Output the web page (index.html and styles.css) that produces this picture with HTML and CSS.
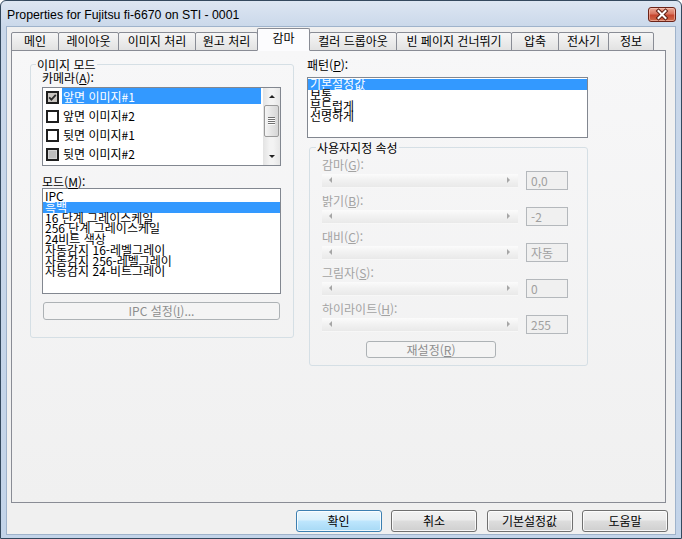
FILE: index.html
```html
<!DOCTYPE html>
<html lang="ko">
<head>
<meta charset="utf-8">
<title>Properties for Fujitsu fi-6670 on STI - 0001</title>
<link rel="stylesheet" href="styles.css">
</head>
<body>
<div class="window">
  <div class="titlebar">
    <span class="title">Properties for Fujitsu fi-6670 on STI - 0001</span>
    <span class="close">
      <svg width="26" height="13" viewBox="0 0 26 13">
        <path d="M9.5 3 L16.5 10 M16.5 3 L9.5 10" stroke="#5b1d12" stroke-width="4" stroke-linecap="square" fill="none"/>
        <path d="M9.5 3 L16.5 10 M16.5 3 L9.5 10" stroke="#ffffff" stroke-width="2" stroke-linecap="square" fill="none"/>
      </svg>
    </span>
  </div>
  <div class="client">
    <div class="tabs">
      <div class="tab t-main">메인</div>
      <div class="tab t-layout">레이아웃</div>
      <div class="tab t-image">이미지 처리</div>
      <div class="tab t-doc">원고 처리</div>
      <div class="tab t-gamma active">감마</div>
      <div class="tab t-dropout">컬러 드롭아웃</div>
      <div class="tab t-blank">빈 페이지 건너뛰기</div>
      <div class="tab t-comp">압축</div>
      <div class="tab t-imprinter">전사기</div>
      <div class="tab t-info">정보</div>
    </div>
    <div class="panel">
      <div class="columns">
        <fieldset class="group group-mode">
          <legend>이미지 모드</legend>
          <div class="label">카메라(<u>A</u>):</div>
          <div class="listbox camera">
            <div class="checklist">
              <div class="check-row">
                <span class="cb cb-checked">
                  <svg width="9" height="9" viewBox="0 0 9 9"><path d="M1.2 4.3 L3.4 6.6 L7.8 1.8" stroke="#2a2a2a" stroke-width="1.8" fill="none"/></svg>
                </span>
                <span class="item-text selected">앞면 이미지#1</span>
              </div>
              <div class="check-row">
                <span class="cb"></span>
                <span class="item-text">앞면 이미지#2</span>
              </div>
              <div class="check-row">
                <span class="cb"></span>
                <span class="item-text">뒷면 이미지#1</span>
              </div>
              <div class="check-row">
                <span class="cb cb-mixed"></span>
                <span class="item-text">뒷면 이미지#2</span>
              </div>
            </div>
            <div class="vscroll">
              <div class="sb-btn"><span class="arrow-up"></span></div>
              <div class="sb-thumb"><span class="grip"></span></div>
              <div class="sb-space"></div>
              <div class="sb-btn"><span class="arrow-down"></span></div>
            </div>
          </div>
          <div class="label label-mode">모드(<u>M</u>):</div>
          <div class="listbox mode">
            <div class="opt">IPC</div>
            <div class="opt selected">흑백</div>
            <div class="opt">16 단계 그레이스케일</div>
            <div class="opt">256 단계 그레이스케일</div>
            <div class="opt">24비트 색상</div>
            <div class="opt">자동감지 16-레벨그레이</div>
            <div class="opt">자동감지 256-레벨그레이</div>
            <div class="opt">자동감지 24-비트그레이</div>
          </div>
          <button class="btn-disabled ipc-btn" type="button">IPC 설정(<u>I</u>)...</button>
        </fieldset>

        <div class="right-col">
          <div class="label">패턴(<u>P</u>):</div>
          <div class="listbox pattern">
            <div class="opt selected">기본설정값</div>
            <div class="opt">보통</div>
            <div class="opt">부드럽게</div>
            <div class="opt">선명하게</div>
          </div>
          <fieldset class="group custom">
            <legend>사용자지정 속성</legend>
            <div class="prop">
              <div class="label prop-label">감마(<u>G</u>):</div>
              <div class="prop-row">
                <div class="track"><span class="tri-left"></span><span class="tri-right"></span></div>
                <div class="editbox">0,0</div>
              </div>
            </div>
            <div class="prop">
              <div class="label prop-label">밝기(<u>B</u>):</div>
              <div class="prop-row">
                <div class="track"><span class="tri-left"></span><span class="tri-right"></span></div>
                <div class="editbox">-2</div>
              </div>
            </div>
            <div class="prop">
              <div class="label prop-label">대비(<u>C</u>):</div>
              <div class="prop-row">
                <div class="track"><span class="tri-left"></span><span class="tri-right"></span></div>
                <div class="editbox">자동</div>
              </div>
            </div>
            <div class="prop">
              <div class="label prop-label">그림자(<u>S</u>):</div>
              <div class="prop-row">
                <div class="track"><span class="tri-left"></span><span class="tri-right"></span></div>
                <div class="editbox">0</div>
              </div>
            </div>
            <div class="prop">
              <div class="label prop-label">하이라이트(<u>H</u>):</div>
              <div class="prop-row">
                <div class="track"><span class="tri-left"></span><span class="tri-right"></span></div>
                <div class="editbox">255</div>
              </div>
            </div>
            <button class="btn-disabled reset-btn" type="button">재설정(<u>R</u>)</button>
          </fieldset>
        </div>
      </div>
    </div>
    <div class="buttons">
      <button class="pbtn default" type="button">확인</button>
      <button class="pbtn" type="button">취소</button>
      <button class="pbtn" type="button">기본설정값</button>
      <button class="pbtn" type="button">도움말</button>
    </div>
  </div>
</div>
</body>
</html>
```
FILE: styles.css
```css
* { box-sizing: border-box; }
html, body { margin: 0; padding: 0; }
body {
  width: 682px;
  height: 539px;
  overflow: hidden;
  font-family: "Noto Sans CJK KR", "Liberation Sans", sans-serif;
  font-size: 12px;
  color: #000;
  background: #ffffff;
}
u { text-decoration: underline; text-underline-offset: 1px; }

.window {
  width: 682px;
  height: 539px;
  display: flex;
  flex-direction: column;
  border: 1px solid #34495e;
  border-radius: 6px 6px 0 0;
  background: linear-gradient(180deg, #dde6f2 0px, #cad8ea 26px, #c3d4e9 100%);
  padding: 0 6px 4px 6px;
}

.titlebar {
  height: 26px;
  display: flex;
  align-items: center;
  justify-content: space-between;
  margin-right: -1px;
}
.title {
  font-family: "Liberation Sans", Arial, sans-serif;
  font-size: 12.3px;
  color: #000;
  padding-top: 1px;
}
.close {
  width: 28px;
  height: 15px;
  margin-top: 1px;
  border: 1px solid #6b2318;
  border-radius: 3px;
  background: linear-gradient(#eaa995, #d97560 45%, #c6462e 55%, #d06b4c);
  box-shadow: inset 0 0 0 1px rgba(255, 215, 205, 0.5);
  display: flex;
  align-items: center;
  justify-content: center;
}

.client {
  flex: 1;
  display: flex;
  flex-direction: column;
  background: #f0f0f0;
  padding: 0 7px 2px 4px;
  box-shadow: 0 0 0 1px #9fb3cb;
}

/* tabs */
.tabs {
  display: flex;
  align-items: flex-end;
  height: 24px;
  margin-bottom: -1px;
  position: relative;
  z-index: 2;
}
.tab {
  height: 19px;
  margin-right: -1px;
  border: 1px solid #898c95;
  border-radius: 2px 2px 0 0;
  background: linear-gradient(#f6f6f6, #e2e2e2);
  text-align: center;
  line-height: 16px;
  white-space: nowrap;
}
.tab.active {
  height: 23px;
  padding-top: 1px;
  background: #fcfcfe;
  border-bottom-color: #fcfcfe;
  position: relative;
  z-index: 1;
}
.t-main { width: 48px; }
.t-layout { width: 61px; }
.t-image { width: 78px; }
.t-doc { width: 63px; }
.t-gamma { width: 53px; }
.t-dropout { width: 88px; }
.t-blank { width: 116px; }
.t-comp { width: 48px; }
.t-imprinter { width: 51px; }
.t-info { width: 46px; }

/* panel */
.panel {
  flex: 1;
  margin-right: 2px;
  border: 1px solid #898c95;
  background: linear-gradient(#f7f7f8, #f0f0f0);
  padding: 7px 0 0 18px;
}
.columns {
  display: grid;
  grid-template-columns: 264px 281px;
  column-gap: 13px;
  align-items: start;
}

.group {
  margin: 0;
  min-width: 0;
  border: 1px solid #d5dfe5;
  border-radius: 3px;
  padding: 0 12px 17px 11px;
}
.group legend {
  padding: 0 1px;
  margin-left: -6px;
  height: 13px;
  line-height: 13px;
  color: #000;
}
.label {
  height: 13px;
  line-height: 13px;
  white-space: nowrap;
}

.listbox {
  border: 1px solid #828790;
  background: #ffffff;
}

/* camera checklist */
.camera {
  margin-top: 3px;
  height: 79px;
  display: flex;
}
.checklist {
  flex: 1;
  padding: 0 2px 0 3px;
}
.check-row {
  height: 19px;
  display: flex;
  align-items: flex-start;
}
.cb {
  flex: none;
  width: 13px;
  height: 13px;
  margin-top: 3px;
  margin-right: 3px;
  border: 2px solid #1e1e1e;
  background: #ffffff;
  display: flex;
  align-items: center;
  justify-content: center;
}
.cb-checked { background: #c9c5c0; }
.cb-mixed { background: #bdbdbd; box-shadow: inset 0 0 0 1px #d2d2d2; }
.item-text {
  flex: 1;
  height: 16px;
  line-height: 14px;
  padding: 2px 0 0 1px;
  white-space: nowrap;
}
.item-text.selected { background: #3399ff; color: #ffffff; }

.vscroll {
  width: 17px;
  display: flex;
  flex-direction: column;
  background: linear-gradient(to right, #e3e3e3, #f3f3f3 40%, #f3f3f3 60%, #e6e6e6);
}
.sb-btn {
  height: 17px;
  display: flex;
  align-items: center;
  justify-content: center;
}
.arrow-up {
  width: 0;
  height: 0;
  border-left: 3px solid transparent;
  border-right: 3px solid transparent;
  border-bottom: 3px solid #222;
}
.arrow-down {
  width: 0;
  height: 0;
  border-left: 3px solid transparent;
  border-right: 3px solid transparent;
  border-top: 3px solid #222;
}
.sb-thumb {
  height: 32px;
  margin: 0 1px;
  border: 1px solid #9a9a9a;
  border-radius: 2px;
  background: linear-gradient(to right, #f5f5f5, #e4e4e4 50%, #d6d6d6);
  display: flex;
  align-items: center;
  justify-content: center;
}
.grip {
  width: 7px;
  height: 8px;
  background: repeating-linear-gradient(to bottom, #707070 0 1px, #fbfbfb 1px 2px);
}
.sb-space { flex: 1; }

/* mode list */
.label-mode { margin-top: 9px; }
.mode {
  height: 106px;
  padding-top: 2px;
}
.opt {
  height: 10.75px;
  line-height: 10.75px;
  padding-left: 2px;
  white-space: nowrap;
}
.opt.selected { background: #3399ff; color: #ffffff; }

.btn-disabled {
  display: block;
  font-family: inherit;
  font-size: 12px;
  color: #8e8e8e;
  border: 1px solid #adb2b5;
  border-radius: 3px;
  background: #f4f4f4;
  padding: 0;
  line-height: 14px;
}
.ipc-btn {
  width: calc(100% - 2px);
  height: 18px;
  margin: 8px 1px 0 1px;
}

/* right column */
.pattern {
  margin-top: 6px;
  height: 61px;
  padding-top: 1px;
}
.custom {
  margin: 3px 0 0 2px;
  padding: 0 19px 7px 12px;
}
.prop { margin-top: 4px; }
.prop-label { color: #a3a3a3; }
.prop-row {
  height: 19px;
  display: flex;
  align-items: center;
  gap: 8px;
}
.track {
  flex: 1;
  height: 14px;
  background: linear-gradient(#fbfbfb, #f1f1f1 50%, #e9e9e9);
  border-bottom: 1px solid #f7f7f7;
  display: flex;
  align-items: center;
  justify-content: space-between;
  padding: 0 8px 0 7px;
}
.tri-left {
  width: 0;
  height: 0;
  border-top: 3px solid transparent;
  border-bottom: 3px solid transparent;
  border-right: 3px solid #a6a6a6;
}
.tri-right {
  width: 0;
  height: 0;
  border-top: 3px solid transparent;
  border-bottom: 3px solid transparent;
  border-left: 3px solid #a6a6a6;
}
.editbox {
  width: 42px;
  height: 19px;
  border: 1px solid #b4b8bc;
  background: #f0f0f0;
  color: #a0a0a0;
  line-height: 17px;
  padding-left: 4px;
  white-space: nowrap;
}
.reset-btn {
  width: 130px;
  height: 17px;
  margin: 7px 0 0 44px;
  line-height: 13px;
}

/* bottom buttons */
.buttons {
  display: flex;
  justify-content: flex-end;
  gap: 9.5px;
  margin-top: 7px;
  height: 22px;
}
.pbtn {
  width: 86px;
  height: 22px;
  padding: 0;
  font-family: inherit;
  font-size: 12px;
  color: #000;
  line-height: 18px;
  border: 1px solid #707070;
  border-radius: 3px;
  background: linear-gradient(#f2f2f2, #ebebeb 45%, #dddddd 50%, #cfcfcf);
  box-shadow: inset 0 0 0 1px rgba(255, 255, 255, 0.8);
}
.pbtn.default {
  border-color: #3c7fb1;
  background: linear-gradient(#eaf6fd, #d9f0fc 45%, #bee6fd 50%, #a7d9f5);
}
```
